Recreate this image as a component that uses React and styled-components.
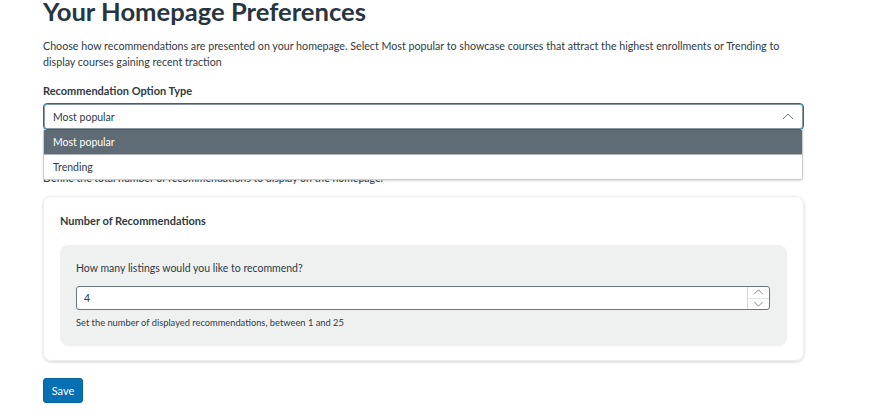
import React from 'react';
import styled, { createGlobalStyle } from 'styled-components';

const GlobalStyle = createGlobalStyle`
    html, body {
        margin: 0;
        padding: 0;
        background: #ffffff;
    }
    body {
        font-family: Lato, "Noto Sans", sans-serif;
        color: #2d3b45;
        overflow: hidden;
    }
`;

const Page = styled.div`
    width: 761px;
    padding-left: 43px;
`;

const Title = styled.h1`
    margin: -5px 0 0;
    font-size: 25.6px;
    line-height: 32px;
    font-weight: 700;
    color: #273540;
`;

const Text = styled.p`
    margin: ${p => p.$m || '0'};
    font-size: ${p => p.$size || '10.5px'};
    line-height: 16px;
    font-weight: ${p => (p.$bold ? 700 : 400)};
    color: #2d3b45;
`;

const SelectWrap = styled.div`
    position: relative;
    margin-top: 4px;
`;

const SelectBox = styled.div`
    box-sizing: border-box;
    height: 27px;
    border: 1px solid #0374b5;
    border-radius: 4px;
    box-shadow: inset 0 0 0 1px #8b98a2;
    display: flex;
    align-items: center;
    justify-content: space-between;
    padding: 0 9px 0 9px;
    font-size: 10.5px;
    background: #fff;
`;

const Menu = styled.ul`
    position: absolute;
    top: 27px;
    left: 0;
    right: 1px;
    margin: 0;
    padding: 0;
    list-style: none;
    background: #fff;
    border: 1px solid #c7cdd1;
    border-top: none;
    border-radius: 0 0 3px 3px;
    box-shadow: 0 1px 2px rgba(0, 0, 0, 0.15);
    z-index: 5;
`;

const Option = styled.li`
    height: 24px;
    display: flex;
    align-items: center;
    padding: 0 9px;
    font-size: 10.5px;
    background: ${p => (p.$active ? '#5f6c76' : '#fff')};
    color: ${p => (p.$active ? '#fff' : '#2d3b45')};
    border-bottom: ${p => (p.$active ? '1px solid #aeb5ba' : 'none')};
`;

const Card = styled.section`
    box-sizing: border-box;
    margin-top: 10px;
    border: 1px solid #eceef0;
    border-radius: 8px;
    box-shadow: 0 1px 3px rgba(0, 0, 0, 0.18);
    padding: 16px 16px 14px;
`;

const Panel = styled.div`
    margin-top: 16px;
    background: #eff1f1;
    border-radius: 8px;
    padding: 15px 17px 15px 16px;
`;

const NumberInput = styled.div`
    box-sizing: border-box;
    margin-top: 10px;
    height: 24px;
    border: 1px solid #6b7780;
    border-radius: 3px;
    background: #fff;
    display: flex;
    align-items: stretch;
`;

const Value = styled.div`
    flex: 1;
    display: flex;
    align-items: center;
    padding-left: 7px;
    font-size: 10.5px;
`;

const Spinner = styled.div`
    width: 21px;
    border-left: 1px solid #d4d8db;
    display: flex;
    flex-direction: column;
`;

const SpinBtn = styled.div`
    flex: 1;
    display: flex;
    align-items: center;
    justify-content: center;
    border-top: ${p => (p.$bottom ? '1px solid #e2e5e7' : 'none')};
`;

const SaveButton = styled.button`
    margin-top: 17px;
    width: 40px;
    height: 25px;
    padding: 0;
    border: 1px solid #0363a0;
    border-radius: 3px;
    background: #0770b5;
    color: #fff;
    font-family: Lato, "Noto Sans", sans-serif;
    font-size: 11px;
`;

const Chevron = ({ up = true, w = 12, h = 7, color = '#6b7780' }) => (
    <svg width={w} height={h} viewBox="0 0 12 7" fill="none">
        <path
            d={up ? 'M1 6L6 1L11 6' : 'M1 1L6 6L11 1'}
            stroke={color}
            strokeWidth="1"
        />
    </svg>
);

const App = () => {
    return (
        <>
            <GlobalStyle />
            <Page>
                <Title>Your Homepage Preferences</Title>
                <Text $m="11px 0 0" $size="10.7px">
                    Choose how recommendations are presented on your homepage. Select Most popular to showcase courses that attract the highest enrollments or Trending to display courses gaining recent traction
                </Text>
                <Text $bold $m="13px 0 0" $size="11px">Recommendation Option Type</Text>
                <SelectWrap>
                    <SelectBox>
                        <span>Most popular</span>
                        <Chevron up w={12} h={7} />
                    </SelectBox>
                    <Menu>
                        <Option $active>Most popular</Option>
                        <Option>Trending</Option>
                    </Menu>
                </SelectWrap>
                <Text $m="40px 0 0">Define the total number of recommendations to display on the homepage.</Text>
                <Card>
                    <Text $bold $size="11px">Number of Recommendations</Text>
                    <Panel>
                        <Text>How many listings would you like to recommend?</Text>
                        <NumberInput>
                            <Value>4</Value>
                            <Spinner>
                                <SpinBtn><Chevron up w={11} h={6} /></SpinBtn>
                                <SpinBtn $bottom><Chevron up={false} w={11} h={6} /></SpinBtn>
                            </Spinner>
                        </NumberInput>
                        <Text $size="9.3px" $m="5px 0 0">Set the number of displayed recommendations, between 1 and 25</Text>
                    </Panel>
                </Card>
                <SaveButton>Save</SaveButton>
            </Page>
        </>
    );
};

export default App;
